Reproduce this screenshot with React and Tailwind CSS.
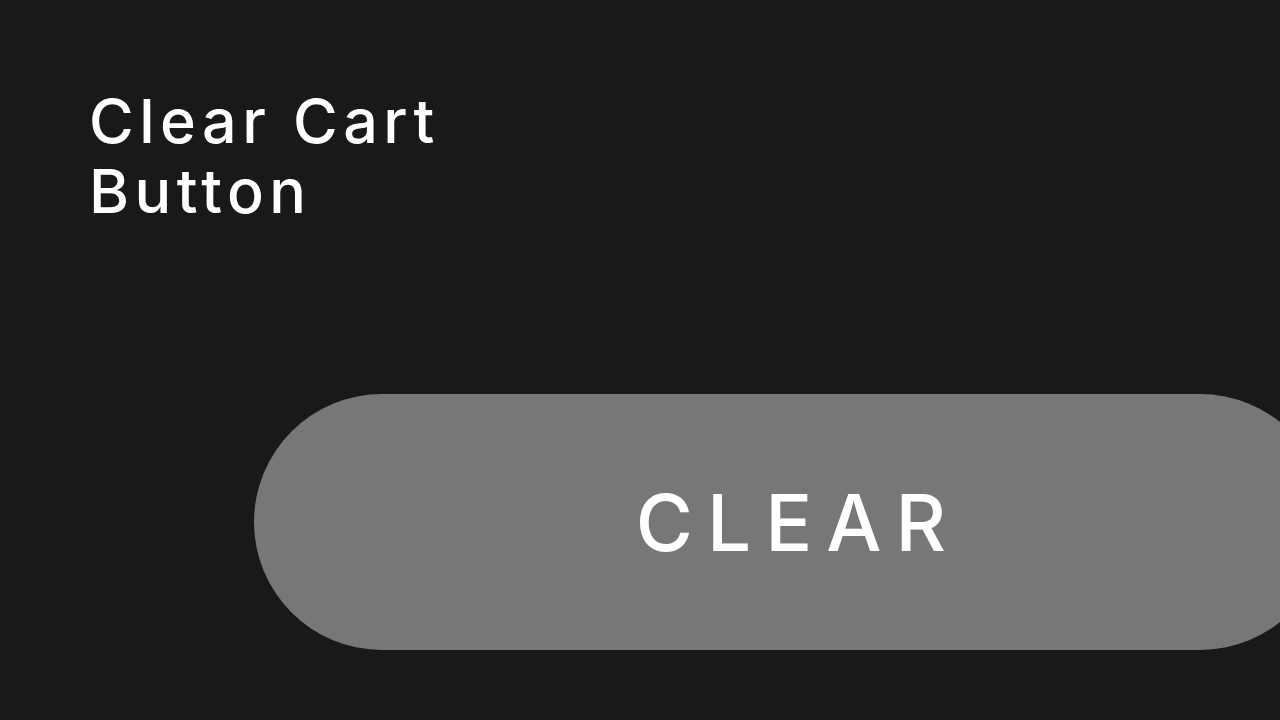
import React from 'react';

// Card showing a large pill-shaped "clear cart" button
export default function App() {
  return (
    <div
      className="w-[1280px] h-[720px] overflow-hidden bg-[#191919] text-white"
      style={{ fontFamily: 'Inter, "DejaVu Sans", sans-serif' }}
    >
      <div className="pt-[86px] pl-[89px]">
        <h1 className="text-[61px] leading-[70px] font-medium tracking-[0.09em]">
          Clear Cart
          <br />
          Button
        </h1>
      </div>

      <div className="mt-[168px] ml-[254px]">
        <button
          type="button"
          className="w-[1074px] h-[256px] pl-[14px] rounded-full bg-[#777777] flex items-center justify-center text-[78px] font-medium tracking-[0.18em] text-white"
        >
          CLEAR
        </button>
      </div>
    </div>
  );
}
